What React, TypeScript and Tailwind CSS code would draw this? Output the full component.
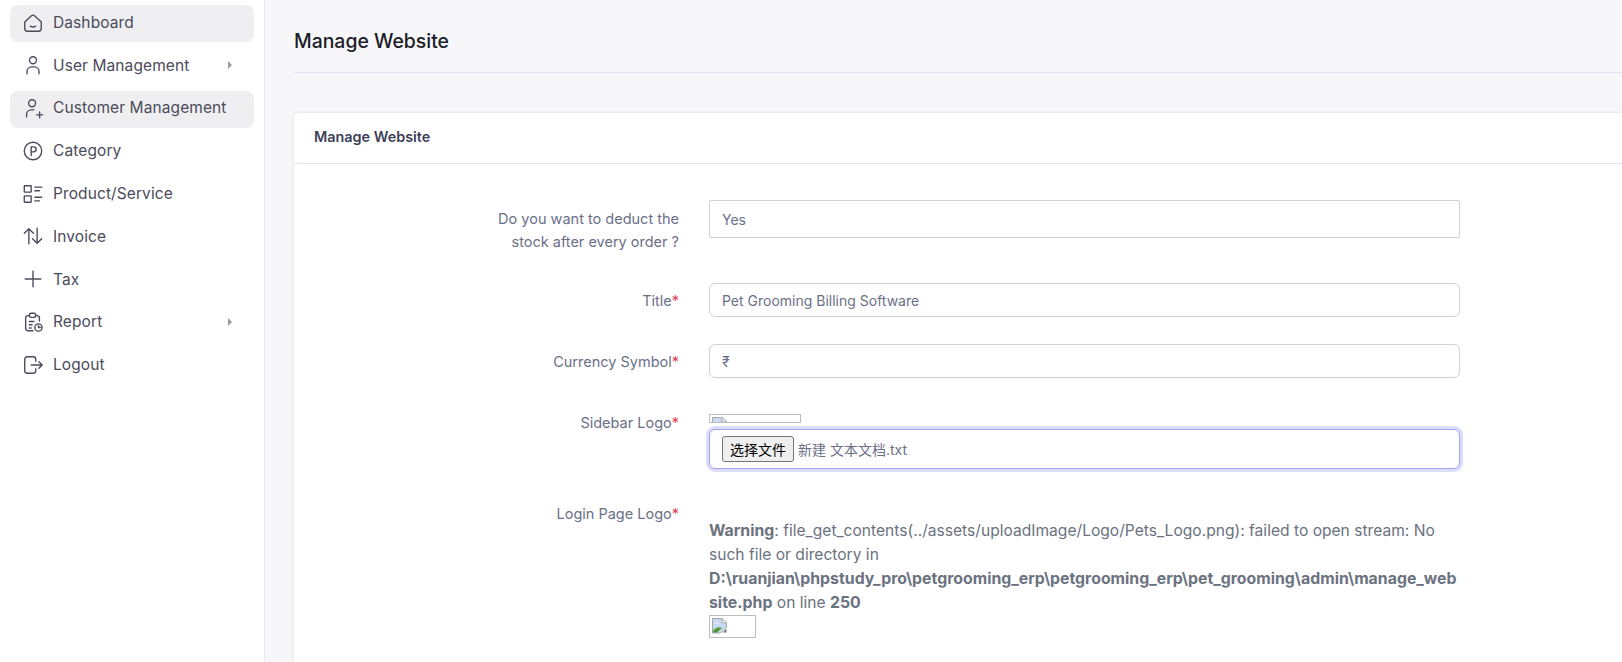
import { ReactNode } from "react";

const stroke = {
  fill: "none",
  stroke: "currentColor",
  strokeWidth: 1.5,
  strokeLinecap: "round" as const,
  strokeLinejoin: "round" as const,
};

function Ico({ children }: { children: ReactNode }) {
  return (
    <svg viewBox="0 0 24 24" width="22" height="22" {...stroke}>
      {children}
    </svg>
  );
}

const menu = [
  {
    label: "Dashboard",
    active: true,
    icon: (
      <Ico>
        <path d="M3 10.800 10 4.300a3 3 0 0 1 4 0l7 6.500V18a3 3 0 0 1-3 3H6a3 3 0 0 1-3-3z" />
        <path d="M9 15.500c1.800 1 4.200 1 6 0" />
      </Ico>
    ),
  },
  {
    label: "User Management",
    arrow: true,
    icon: (
      <Ico>
        <circle cx="12" cy="6.800" r="3.800" />
        <path d="M5.500 21.500v-2.500a5 5 0 0 1 5-5h3a5 5 0 0 1 5 5v2.500" />
      </Ico>
    ),
  },
  {
    label: "Customer Management",
    active: true,
    icon: (
      <Ico>
        <circle cx="11" cy="6.800" r="3.800" />
        <path d="M5 21.500v-2.500a5 5 0 0 1 5-5h3" />
        <path d="M16 19.500h6.500M19.250 16.300v6.500" />
      </Ico>
    ),
  },
  {
    label: "Category",
    icon: (
      <Ico>
        <circle cx="12" cy="12" r="9.500" />
        <path d="M10 17V7.500h2.800a2.700 2.700 0 0 1 0 5.400H10" />
      </Ico>
    ),
  },
  {
    label: "Product/Service",
    icon: (
      <Ico>
        <rect x="2.500" y="3" width="7.500" height="7" rx="0.5" />
        <rect x="2.500" y="14" width="7.500" height="7" rx="0.5" />
        <path d="M14 4.500h7.500M14 8.500h5M14 15.500h7.500M14 19.500h5" />
      </Ico>
    ),
  },
  {
    label: "Invoice",
    icon: (
      <Ico>
        <path d="M7.500 20.500V4M2.500 9l5-5 5 5" />
        <path d="M16.500 3.500V20M11.500 15l5 5 5-5" />
      </Ico>
    ),
  },
  {
    label: "Tax",
    icon: (
      <Ico>
        <path d="M12 3.500v17M3.500 12h17" />
      </Ico>
    ),
  },
  {
    label: "Report",
    arrow: true,
    icon: (
      <Ico>
        <path d="M8 5H6.500A2.500 2.500 0 0 0 4 7.500V19a2.500 2.500 0 0 0 2.500 2.500H12" />
        <path d="M15 5h1.500A2.500 2.500 0 0 1 19 7.500V11" />
        <rect x="8" y="2.500" width="7" height="4.500" rx="2" />
        <path d="M8 11.500h5M8 15h3M8 18.500h2" />
        <circle cx="18" cy="18" r="4" />
        <path d="M18 16v2h2.200" />
      </Ico>
    ),
  },
  {
    label: "Logout",
    icon: (
      <Ico>
        <path d="M15 8V5.500A2.500 2.500 0 0 0 12.500 3h-7A2.500 2.500 0 0 0 3 5.500v13A2.500 2.500 0 0 0 5.500 21h7a2.500 2.500 0 0 0 2.500-2.500V16" />
        <path d="M10 12h12M18.500 8.500 22 12l-3.500 3.500" />
      </Ico>
    ),
  },
];

function BrokenImg() {
  return (
    <svg width="16" height="16" viewBox="0 0 16 16" className="block shrink-0">
      <path d="M0.500 0.500h9.500l4.500 4.500v4l-6 6h-8z" fill="#c9d9f3" stroke="#a6a6a6" />
      <path d="M3 5.500c1-1.500 3-1.500 4 0z" fill="#ffffff" />
      <path d="M1 14.500v-1.500c3-4 6-4.500 9-3l-5 4.500z" fill="#4f9a32" />
      <path d="M10 0.500v4.500h4.500z" fill="#ffffff" stroke="#a6a6a6" />
      <path d="M10.500 14.500l4-4v4z" fill="#7a7a7a" />
    </svg>
  );
}

function Sidebar() {
  return (
    <aside className="w-[265px] shrink-0 bg-white border-r border-[#e8e8ee] px-[10px] pt-[5px]">
      <ul className="flex flex-col gap-[5.8px]">
        {menu.map((m) => (
          <li
            key={m.label}
            className={`h-[37px] flex items-center pl-[12px] pr-[22px] pb-[2px] rounded-[8px] text-[#4b4b5a] ${
              m.active ? "bg-[#efeff1]" : ""
            }`}
          >
            <span className="w-[22px] flex justify-center text-[#4b4b5a]">{m.icon}</span>
            <span className="ml-[9px] flex-1 text-[15.5px] tracking-[0.1px]">{m.label}</span>
            {m.arrow && (
              <span className="w-0 h-0 border-y-[4px] border-y-transparent border-l-[4px] border-l-[#9a9aa5]" />
            )}
          </li>
        ))}
      </ul>
    </aside>
  );
}

function Label({ children, req = true }: { children: ReactNode; req?: boolean }) {
  return (
    <label className="w-[384px] shrink-0 pt-[1px] text-right text-[14.5px] leading-[23px] text-[#6b7088]">
      {children}
      {req && <span className="text-[#e0425a]">*</span>}
    </label>
  );
}

function Field({ value, square }: { value: string; square?: boolean }) {
  return (
    <div
      className={`w-[751px] bg-white border border-[#cfd0dc] flex items-center pl-[12px] text-[14px] text-[#6b7088] ${
        square ? "h-[38px] rounded-[2px]" : "h-[34px] rounded-[6px]"
      }`}
    >
      {value}
    </div>
  );
}

export default function App() {
  return (
    <div className="h-[662px] flex overflow-hidden bg-[#f7f7fa] font-['Inter','Noto_Sans_CJK_SC',sans-serif]">
      <Sidebar />
      <main className="flex-1 min-w-0 pl-[29px] overflow-hidden">
        <div className="h-[73px] border-b border-[#e0e1f3] flex items-center pt-[12px]">
          <h1 className="text-[19.4px] font-medium text-[#1c1c28]">Manage Website</h1>
        </div>
        <section className="mt-[40px] w-[1400px] h-[700px] bg-white rounded-tl-[4px] shadow-[0_0_3px_rgba(60,60,90,0.15)]">
          <div className="h-[51px] flex items-center pl-[20px] pb-[3px] border-b border-[#e2e3ec] text-[14.4px] font-semibold text-[#3d3f58]">
            Manage Website
          </div>
          <div className="pt-[36px] pl-[1px] flex flex-col">
            <div className="flex gap-[30px] items-start">
              <Label req={false}>
                <span className="block pt-[6px]">
                  Do you want to deduct the
                  <br />
                  stock after every order ?
                </span>
              </Label>
              <Field value="Yes" square />
            </div>
            <div className="flex gap-[30px] items-center mt-[30px]">
              <Label>Title</Label>
              <Field value="Pet Grooming Billing Software" />
            </div>
            <div className="flex gap-[30px] items-center mt-[27px]">
              <Label>Currency Symbol</Label>
              <Field value="₹" />
            </div>
            <div className="flex gap-[30px] items-start mt-[32px]">
              <Label>Sidebar Logo</Label>
              <div className="flex flex-col pt-[4px]">
                <div className="w-[92px] h-[9px] border border-[#bdbdbd] overflow-hidden p-[2px]">
                  <BrokenImg />
                </div>
                <div className="mt-[6px] w-[751px] h-[40px] bg-white border border-[#a3a3ee] rounded-[6px] ring-[3px] ring-[#dddcfb] flex items-center pl-[12px] text-[14px] text-[#6b7088]">
                  <button className="h-[26px] w-[72px] bg-[#efefef] border border-[#767676] rounded-[3px] text-[14px] text-black">
                    选择文件
                  </button>
                  <span className="ml-[4px]">新建 文本文档.txt</span>
                </div>
              </div>
            </div>
            <div className="flex gap-[30px] items-start mt-[32px]">
              <Label>Login Page Logo</Label>
              <div className="w-[751px] pt-[18px] text-[15.6px] leading-[24px] text-[#6b7280]">
                <b className="text-[15.85px]">Warning</b>: file_get_contents(../assets/uploadImage/Logo/Pets_Logo.png): failed to open stream: No
                <br />
                such file or directory in
                <br />
                <b className="text-[15.85px]">D:\ruanjian\phpstudy_pro\petgrooming_erp\petgrooming_erp\pet_grooming\admin\manage_web</b>
                <br />
                <b className="text-[15.85px]">site.php</b> on line <b className="text-[15.85px]">250</b>
                <div className="w-[47px] h-[23px] border border-[#bdbdbd] overflow-hidden p-[2px]">
                  <BrokenImg />
                </div>
              </div>
            </div>
          </div>
        </section>
      </main>
    </div>
  );
}
